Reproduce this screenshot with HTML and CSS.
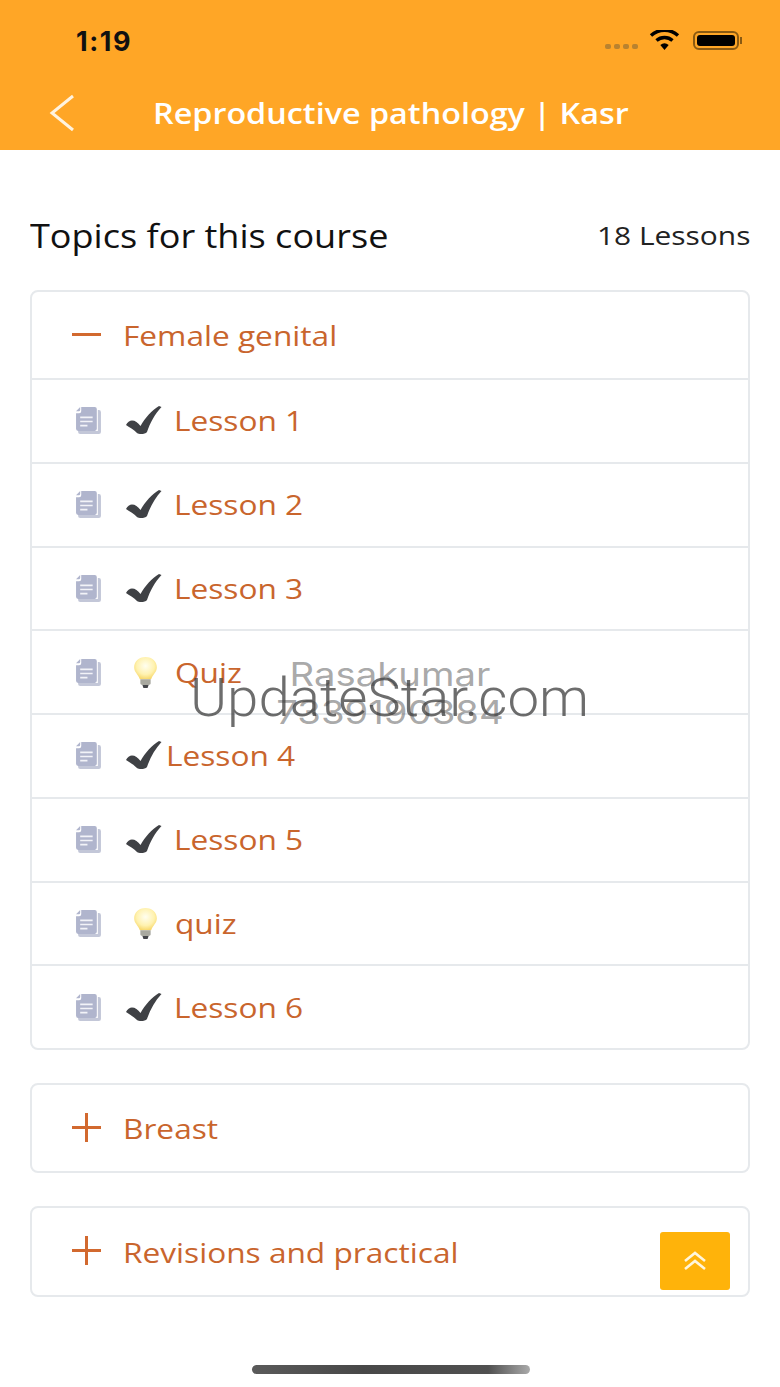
FILE: index.html
```html
<!DOCTYPE html>
<html lang="en">
<head>
  <meta charset="UTF-8">
  <meta name="viewport" content="width=device-width, initial-scale=1.0">
  <title>Reproductive pathology | Kasr</title>
  <link rel="stylesheet" href="styles.css">
</head>
<body>
  <svg class="defs" width="0" height="0">
    <symbol id="doc" viewBox="0 0 26 26">
      <path d="M6 3h17a2 2 0 0 1 2 2v19a2 2 0 0 1-2 2H5a2 2 0 0 1-2-2v-1h19V3z" fill="#c3c7d8"/>
      <path d="M6 0h13a2 2 0 0 1 2 2v19a2 2 0 0 1-2 2H3a2 2 0 0 1-2-2V6h3a2 2 0 0 0 2-2z" fill="#b0b5cd"/>
      <path d="M5 0v3a1 1 0 0 1-1 1H1z" fill="#b0b5cd"/>
      <path d="M5 10h12M5 14h12M5 18h7" stroke="#f2f3f8" stroke-width="1.6" fill="none"/>
    </symbol>
    <symbol id="check" viewBox="0 0 36 29">
      <path d="M0 19 C1 16.500 4 14.500 6 14.500 C9 14.500 12 16.500 14.500 20 C19 12 26 4 33 0 L35.500 1 C29 8 24 17 21 26 C19 28.500 13 28.500 11 27 C8 24 4 21.500 0 19z" fill="#3f4145"/>
    </symbol>
    <radialGradient id="glow" cx="50%" cy="40%" r="60%">
      <stop offset="0" stop-color="#fffef0"/>
      <stop offset="0.65" stop-color="#fff2b0"/>
      <stop offset="1" stop-color="#f8d96e"/>
    </radialGradient>
    <symbol id="bulb" viewBox="0 0 26 32">
      <path d="M13 1C6.500 1 2 5.500 2 11c0 5 4 7 5.500 11.500h11C20 18 24 16 24 11 24 5.500 19.500 1 13 1z" fill="url(#glow)"/>
      <path d="M8 22.500h10v4c0 1-1 1.500-2 1.500h-6c-1 0-2-.5-2-1.500z" fill="#a9a9a0"/>
      <path d="M10 28h6l-1 3h-4z" fill="#45464a"/>
    </symbol>
  </svg>

  <header class="topbar">
    <div class="status">
      <span class="clock">1:19</span>
      <div class="status-icons">
        <span class="signal"><i></i><i></i><i></i><i></i></span>
        <svg class="wifi" width="35" height="20" viewBox="0 0 33 20">
          <path d="M16.500 20l-4.200-5a6.500 6.500 0 0 1 8.400 0z" fill="#000"/>
          <path d="M8.500 10.500a12 12 0 0 1 16 0M3 5.500a20 20 0 0 1 27 0" fill="none" stroke="#000" stroke-width="3.400"/>
        </svg>
        <span class="battery"><span class="battery-fill"></span></span>
        <span class="battery-tip"></span>
      </div>
    </div>
    <div class="navbar">
      <svg class="back" width="28" height="38" viewBox="0 0 28 38">
        <path d="M25 2 L4 19 L25 36" fill="none" stroke="#fff3df" stroke-width="3"/>
      </svg>
      <h1 class="title">Reproductive pathology | Kasr</h1>
    </div>
  </header>

  <main class="content">
    <div class="summary">
      <h2 class="summary-title">Topics for this course</h2>
      <span class="summary-count">18 Lessons</span>
    </div>

    <section class="panel">
      <div class="panel-head">
        <span class="toggle toggle-minus"></span>
        <span class="panel-name">Female genital</span>
      </div>
      <div class="row"><svg class="doc"><use href="#doc"/></svg><svg class="check"><use href="#check"/></svg><span class="lesson">Lesson 1</span></div>
      <div class="row"><svg class="doc"><use href="#doc"/></svg><svg class="check"><use href="#check"/></svg><span class="lesson">Lesson 2</span></div>
      <div class="row"><svg class="doc"><use href="#doc"/></svg><svg class="check"><use href="#check"/></svg><span class="lesson">Lesson 3</span></div>
      <div class="row"><svg class="doc"><use href="#doc"/></svg><svg class="bulb"><use href="#bulb"/></svg><span class="lesson">Quiz</span></div>
      <div class="row"><svg class="doc"><use href="#doc"/></svg><svg class="check"><use href="#check"/></svg><span class="lesson lesson-tight">Lesson 4</span></div>
      <div class="row"><svg class="doc"><use href="#doc"/></svg><svg class="check"><use href="#check"/></svg><span class="lesson">Lesson 5</span></div>
      <div class="row"><svg class="doc"><use href="#doc"/></svg><svg class="bulb"><use href="#bulb"/></svg><span class="lesson">quiz</span></div>
      <div class="row"><svg class="doc"><use href="#doc"/></svg><svg class="check"><use href="#check"/></svg><span class="lesson">Lesson 6</span></div>
    </section>

    <section class="panel">
      <div class="panel-head">
        <span class="toggle toggle-plus"></span>
        <span class="panel-name">Breast</span>
      </div>
    </section>

    <section class="panel">
      <div class="panel-head panel-head-last">
        <span class="toggle toggle-plus"></span>
        <span class="panel-name">Revisions and practical</span>
      </div>
    </section>
  </main>

  <button class="to-top" aria-label="Back to top">
    <svg width="24" height="20" viewBox="0 0 24 20">
      <path d="M2 10 L12 2 L22 10 M2 18 L12 10 L22 18" fill="none" stroke="#fff6dc" stroke-width="2.600"/>
    </svg>
  </button>

  <div class="mark-user">Rasakumar<br>7339190384</div>
  <div class="mark-site">UpdateStar.com</div>
  <div class="home-bar"></div>
</body>
</html>
```

FILE: styles.css
```css
html, body { margin: 0; padding: 0; }
body { position: relative; width: 780px; height: 1387px; overflow: hidden; background: #fff; font-family: "Open Sans", sans-serif; }
.defs { position: absolute; }

.topbar { height: 150px; background: #ffa626; display: flex; flex-direction: column; }
.status { height: 78px; display: flex; justify-content: space-between; padding: 0 38px 0 76px; }
.clock { margin-top: 26px; font-family: "Inter", sans-serif; font-weight: 700; font-size: 27px; line-height: 32px; letter-spacing: 1.6px; color: #111; }
.status-icons { display: flex; align-items: flex-start; margin-top: 30px; }
.signal { display: flex; gap: 3px; margin-top: 14px; margin-right: 9px; }
.signal i { width: 6px; height: 5px; border-radius: 2px; background: #b9822f; }
.wifi { margin-right: 11px; }
.battery { width: 46px; height: 19px; margin-top: 1px; box-sizing: border-box; border: 2px solid #8a5a12; border-radius: 6px; padding: 2px; }
.battery-fill { display: block; height: 100%; background: #000; border-radius: 3px; }
.battery-tip { width: 2px; height: 7px; margin: 7px 0 0 1px; background: #8a5a12; }
.navbar { flex: 1; display: flex; align-items: center; padding-left: 48px; }
.back { flex: none; margin-top: -2px; }
.title { margin: -2px 0 0 77px; font-size: 28px; font-weight: 600; color: #fff; line-height: 36px; white-space: nowrap; transform: scaleX(1.155); transform-origin: left center; }

.content { padding: 0 30px; }
.summary { display: flex; justify-content: space-between; align-items: center; height: 140px; padding-top: 30px; box-sizing: border-box; }
.summary-title { margin: 0; font-size: 32px; font-weight: 400; color: #111; transform: scaleX(1.127); transform-origin: left center; }
.summary-count { font-size: 26px; color: #222; transform: scaleX(1.15); transform-origin: right center; }

.panel { border: 2px solid #e6e9ec; border-radius: 8px; margin-bottom: 33px; }
.panel-head { height: 86px; display: flex; align-items: center; padding-left: 40px; }
.panel-head-last { height: 87px; }
.toggle { position: relative; width: 29px; height: 29px; margin-right: 22px; flex: none; }
.toggle::before, .toggle-plus::after { content: ""; position: absolute; background: #d2692f; }
.toggle::before { left: 0; top: 12px; width: 29px; height: 3px; }
.toggle-plus::after { left: 13px; top: -1px; width: 3px; height: 29px; }
.panel-name { font-size: 28px; color: #c9652d; transform: scaleX(1.13); transform-origin: left center; }

.row { height: 81.75px; border-top: 2px solid #e6e9ec; display: flex; align-items: center; padding-left: 43px; }
.doc { width: 27px; height: 27px; flex: none; margin-right: 24px; }
.check { width: 36px; height: 29px; flex: none; margin-right: 12px; }
.bulb { width: 27px; height: 33px; flex: none; margin: 0 16px 0 6px; }
.lesson { font-size: 28px; color: #c9652d; margin-top: -1px; transform: scaleX(1.13); transform-origin: left center; }
.lesson-tight { margin-left: -8px; }

.to-top { position: absolute; left: 660px; top: 1232px; width: 70px; height: 58px; padding: 0; border: 0; border-radius: 3px; background: #ffb30a; display: flex; align-items: center; justify-content: center; }

.mark-user { position: absolute; left: 230px; top: 655px; width: 320px; text-align: center; font-family: "Inter", sans-serif; font-size: 33px; line-height: 38px; color: rgba(95, 95, 95, 0.55); transform: scaleX(1.16); }
.mark-site { position: absolute; left: 190px; top: 668px; font-family: "Roboto", sans-serif; font-weight: 300; font-size: 54px; line-height: 60px; color: rgba(60, 60, 60, 0.75); white-space: nowrap; transform-origin: left center; transform: scaleX(1.045); }
.home-bar { position: absolute; left: 252px; top: 1365px; width: 278px; height: 9px; border-radius: 5px; background: linear-gradient(90deg, #5a5a5a, #484848 40%, #505050 85%, #aaa); }
```
